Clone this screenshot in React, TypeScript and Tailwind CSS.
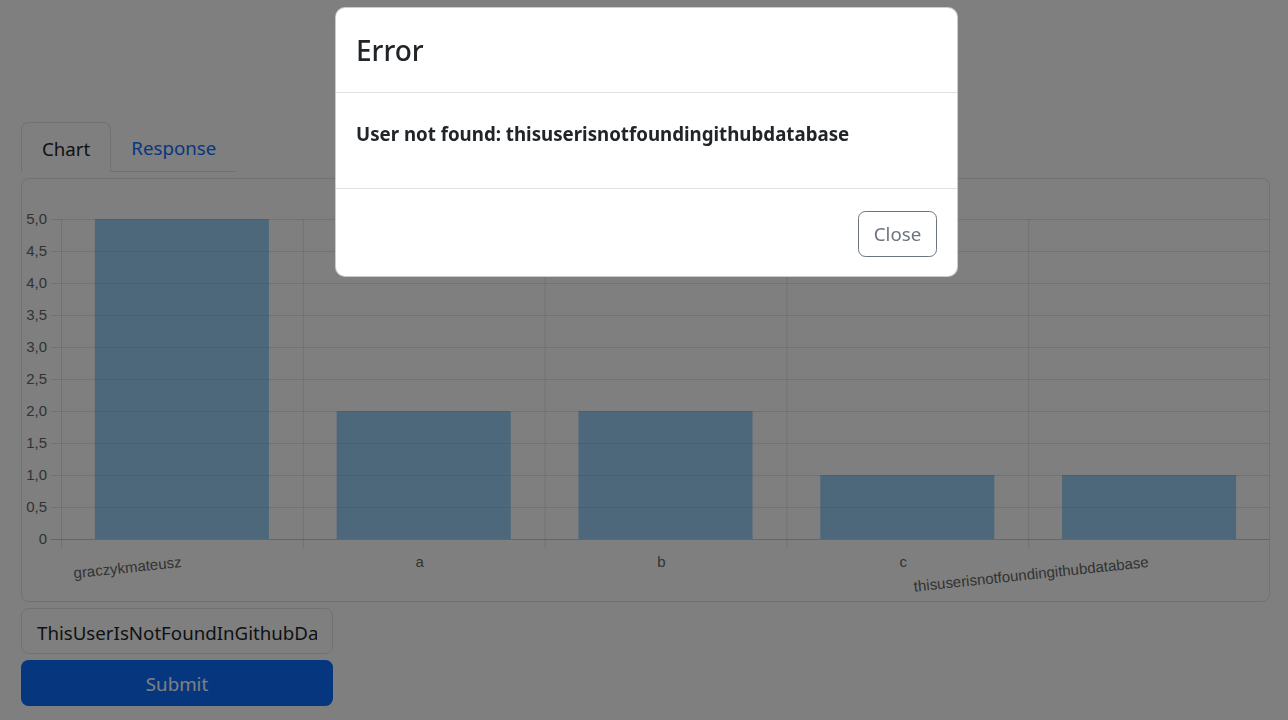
import React from 'react';

const users = [
  { name: 'graczykmateusz', count: 5 },
  { name: 'a', count: 2 },
  { name: 'b', count: 2 },
  { name: 'c', count: 1 },
  { name: 'thisuserisnotfoundingithubdatabase', count: 1 },
];

const ticks = ['5,0', '4,5', '4,0', '3,5', '3,0', '2,5', '2,0', '1,5', '1,0', '0,5', '0'];

// chart geometry, relative to the card
const left = 39;
const right = 1248;
const top = 40;
const bottom = 360;
const colW = (right - left) / users.length;
const unit = (bottom - top) / 5;

const BarChart: React.FC = () => (
  <svg width="1247" height="422" className="block" style={{ fontFamily: '"Liberation Sans", Arial, sans-serif' }}>
    {ticks.map((t, i) => {
      const y = top + (i * unit) / 2;
      return (
        <g key={t}>
          <line x1={29} x2={right} y1={y + 0.5} y2={y + 0.5} stroke={i === ticks.length - 1 ? 'rgba(0,0,0,0.2)' : 'rgba(0,0,0,0.1)'} />
          <text x={25} y={y + 5} fontSize={15} fill="#666" textAnchor="end">{t}</text>
        </g>
      );
    })}
    {users.map((_, i) => (
      <line key={i} x1={left + i * colW + 0.5} x2={left + i * colW + 0.5} y1={top} y2={bottom + 10} stroke="rgba(0,0,0,0.1)" />
    ))}
    <line x1={right + 0.5} x2={right + 0.5} y1={top} y2={bottom + 10} stroke="rgba(0,0,0,0.1)" />
    {users.map((u, i) => {
      const bw = colW * 0.72;
      const x = left + i * colW + (colW - bw) / 2;
      const h = u.count * unit;
      return <rect key={u.name} x={x} y={bottom - h} width={bw} height={h} fill="rgba(54,162,235,0.5)" />;
    })}
    {users.map((u, i) => {
      const cx = left + i * colW + colW / 2;
      const rotate = u.name.length > 1;
      return (
        <text
          key={u.name}
          x={rotate ? cx : cx - 4}
          y={388}
          fontSize={15}
          fill="#666"
          textAnchor={rotate ? 'end' : 'middle'}
          transform={rotate ? `rotate(-6 ${cx} 388)` : undefined}
        >
          {u.name}
        </text>
      );
    })}
  </svg>
);

const App: React.FC = () => {
  return (
    <div className="relative min-h-[720px] bg-white text-[#212529] text-[18.7px]" style={{ fontFamily: '"Noto Sans", "Open Sans", sans-serif' }}>
      <div className="pl-[21px] pt-[122px] w-[1270px]">
        <div className="flex">
          <div className="h-[50px] px-5 pt-[4px] flex items-center rounded-t-[7.5px] border border-b-0 border-[#dee2e6] bg-white">Chart</div>
          <div className="h-[50px] px-5 pt-[4px] flex items-center border-b border-[#dee2e6] text-[#0d6efd]">Response</div>
        </div>
        <div className="mt-[6px] w-[1249px] h-[424px] border border-[#dee2e6] rounded-[7.5px] overflow-hidden">
          <BarChart />
        </div>
        <input
          readOnly
          value="ThisUserIsNotFoundInGithubDatabase"
          className="mt-[6px] block w-[312px] h-[46px] border border-[#dee2e6] rounded-[7.5px] px-[15px] pt-[2px] text-[#212529] outline-none"
        />
        <button className="mt-[6px] w-[312px] h-[46px] pt-[3px] rounded-[7.5px] bg-[#0d6efd] text-white flex items-center justify-center">
          Submit
        </button>
      </div>

      <div className="fixed inset-0 bg-black/50">
        <div className="absolute left-[335px] top-[7px] w-[623px] bg-white rounded-[10px] border border-black/20 overflow-hidden">
          <div className="h-[85px] px-5 flex items-center border-b border-[#dee2e6]">
            <h4 className="text-[28px] font-medium leading-[45px]">Error</h4>
          </div>
          <div className="h-[96px] px-5 pt-[26px] border-b border-[#dee2e6]">
            <p className="font-bold leading-[30px]">User not found: thisuserisnotfoundingithubdatabase</p>
          </div>
          <div className="h-[87px] px-5 pt-[3px] flex items-center justify-end">
            <button className="w-[79px] h-[46px] rounded-[7.5px] border border-[#6c757d] text-[#6c757d]">Close</button>
          </div>
        </div>
      </div>
    </div>
  );
};

export default App;
